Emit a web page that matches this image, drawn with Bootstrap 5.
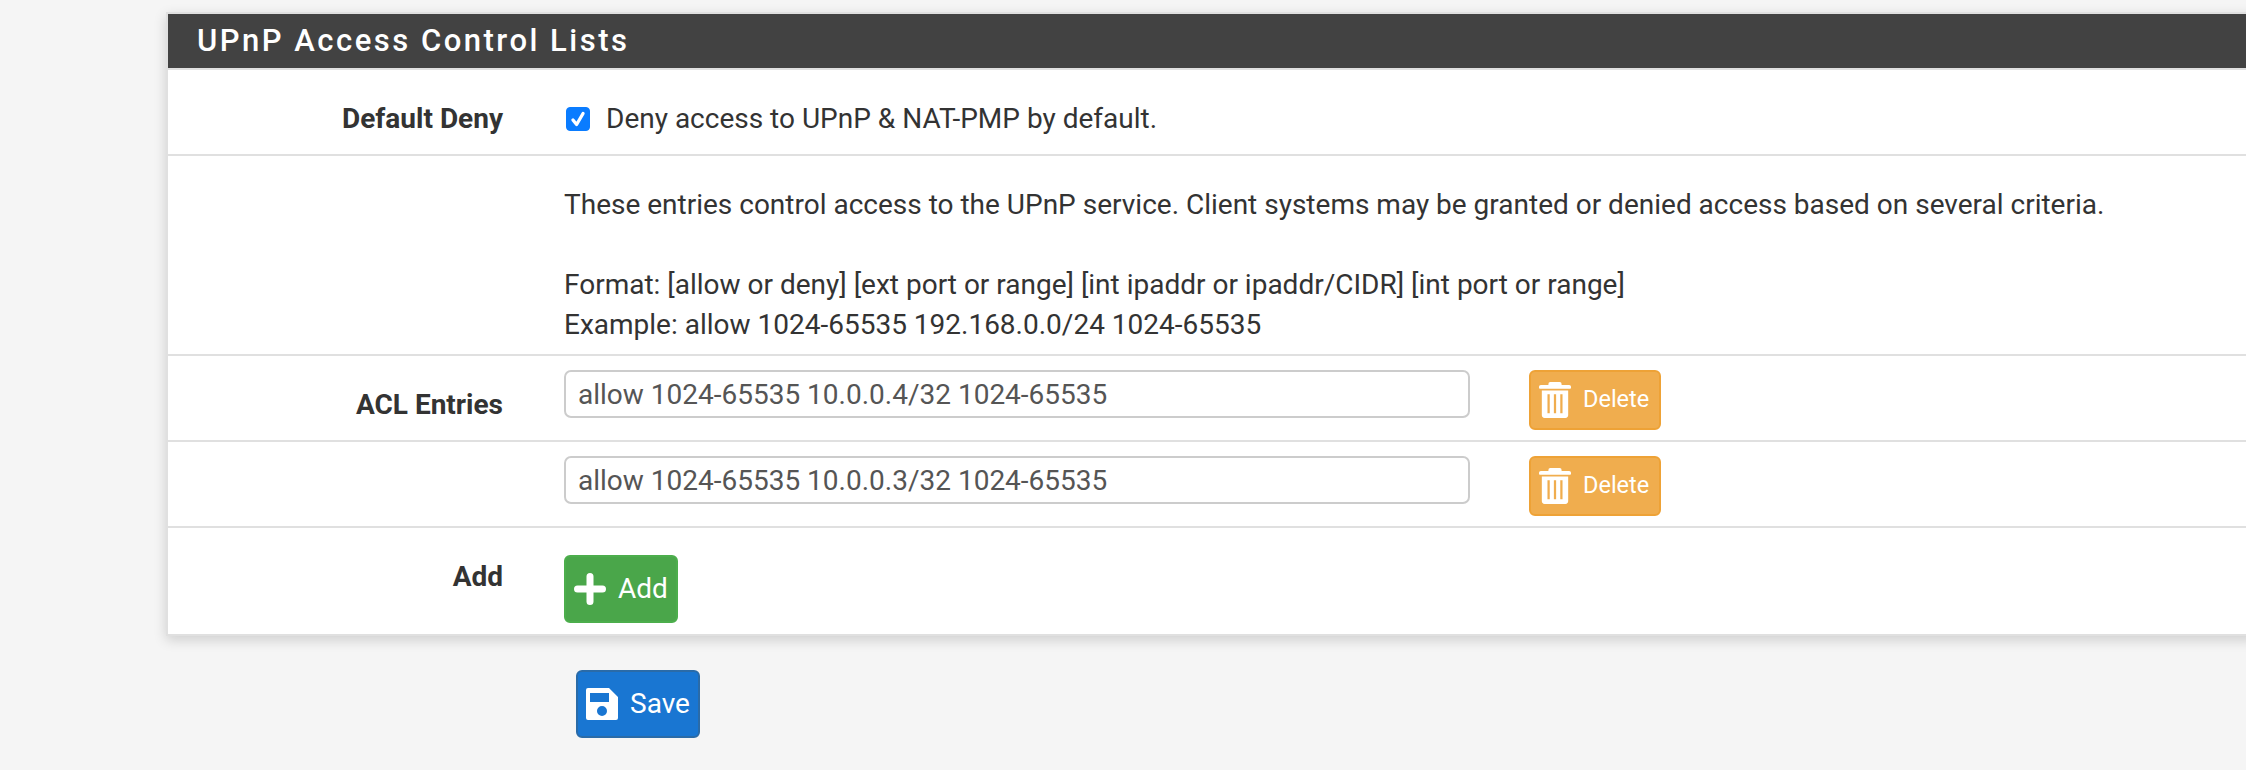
<!DOCTYPE html>
<html lang="en">

<head>
    <meta charset="UTF-8">
    <meta name="viewport" content="width=device-width, initial-scale=1.0">
    <title>UPnP</title>
    <link href="https://cdn.jsdelivr.net/npm/bootstrap@5.3.0/dist/css/bootstrap.min.css" rel="stylesheet">
    <style>
        html, body { height: 100%; overflow: hidden; }
        body { background: #f5f5f5; font-family: Roboto, "Liberation Sans", sans-serif; font-size: 28px; color: #333; line-height: 40px; }
        .acl-wrap { margin: 12px -10px 0 166px; }
        .acl-panel { background: #fff; border: 2px solid #e0e0e0; box-shadow: 0 4px 12px rgba(0,0,0,.16); }
        .acl-head { background: #424242; color: #fff; height: 54px; font-size: 31px; font-weight: 500; letter-spacing: 2.5px; line-height: 54px; padding-left: 29px; }
        .acl-row { border-top: 2px solid #e0e0e0; }
        .acl-label { width: 335px; margin-right: 61px; flex: none; text-align: right; font-weight: 700; }
        .acl-body { flex: 1; }
        .form-check-input.acl-check { width: 24px; height: 24px; margin: 0 16px 0 2px; background-color: #0a7cff; border-color: #0a7cff; border-radius: 4px; background-image: url("data:image/svg+xml,%3csvg xmlns='http://www.w3.org/2000/svg' viewBox='0 0 24 24'%3e%3cpath fill='none' stroke='%23fff' stroke-linecap='round' stroke-linejoin='round' stroke-width='3.600' d='M6.500 13l4 5 7-12'/%3e%3c/svg%3e"); background-size: 100% 100%; }
        .acl-input { width: 906px; height: 48px; border: 2px solid #ccc; border-radius: 7px; padding: 0 12px; font-size: 28px; color: #555; background: #fff; }
        .acl-btn { display: inline-flex; align-items: center; color: #fff; border-radius: 6px; padding: 0; }
        .acl-btn:hover { color: #fff; }
        .btn-del { width: 132px; height: 60px; margin-left: 59px; background: #f0ad4e; border: 2px solid #eea236; font-size: 23.5px; padding-left: 8px; gap: 12px; }
        .btn-add { width: 114px; height: 68px; background: #4aa64a; border: 2px solid #4cae4c; font-size: 28px; padding-left: 8px; gap: 12px; }
        .btn-save { width: 124px; height: 68px; margin-left: 410px; background: #1976d2; border: 2px solid #2a6ba8; font-size: 28px; padding-left: 8px; gap: 12px; }
        .r-deny { height: 86px; padding-top: 29px; }
        .r-help { height: 200px; padding-top: 29px; }
        .r-acl { height: 86px; padding-top: 14px; }
        .r-acl .acl-label { padding-top: 15px; }
        .r-add { height: 108px; padding-top: 27px; }
        .r-add .acl-label { padding-top: 2px; }
        .t-gap { margin-top: 40px; }
        .save-row { margin-top: 34px; }
    </style>
</head>

<body>
    <div class="acl-wrap">
        <div class="acl-panel">
            <div class="acl-head">UPnP Access Control Lists</div>

            <div class="acl-row r-deny d-flex">
                <div class="acl-label">Default Deny</div>
                <div class="acl-body d-flex align-items-center align-self-start">
                    <input class="form-check-input acl-check mt-0" type="checkbox" checked>
                    <span>Deny access to UPnP &amp; NAT-PMP by default.</span>
                </div>
            </div>

            <div class="acl-row r-help d-flex">
                <div class="acl-label"></div>
                <div class="acl-body">
                    <div>These entries control access to the UPnP service. Client systems may be granted or denied access based on several criteria.</div>
                    <div class="t-gap">Format: [allow or deny] [ext port or range] [int ipaddr or ipaddr/CIDR] [int port or range]</div>
                    <div>Example: allow 1024-65535 192.168.0.0/24 1024-65535</div>
                </div>
            </div>

            <div class="acl-row r-acl d-flex">
                <div class="acl-label">ACL Entries</div>
                <div class="acl-body d-flex align-items-start">
                    <input class="acl-input" type="text" value="allow 1024-65535 10.0.0.4/32 1024-65535">
                    <a class="btn acl-btn btn-del">
                        <svg width="32" height="36" viewBox="0 0 34 38" fill="#fff"><path d="M12 0h10a2 2 0 0 1 2 2v1h8a2 2 0 0 1 2 2v1a1 1 0 0 1-1 1H1a1 1 0 0 1-1-1V5a2 2 0 0 1 2-2h8V2a2 2 0 0 1 2-2z"/><path fill-rule="evenodd" d="M3 9h28v26a3 3 0 0 1-3 3H6a3 3 0 0 1-3-3zM9 13v20h2.400V13zM15.800 13v20h2.400V13zM22.600 13v20h2.400V13z"/></svg>
                        Delete
                    </a>
                </div>
            </div>

            <div class="acl-row r-acl d-flex">
                <div class="acl-label"></div>
                <div class="acl-body d-flex align-items-start">
                    <input class="acl-input" type="text" value="allow 1024-65535 10.0.0.3/32 1024-65535">
                    <a class="btn acl-btn btn-del">
                        <svg width="32" height="36" viewBox="0 0 34 38" fill="#fff"><path d="M12 0h10a2 2 0 0 1 2 2v1h8a2 2 0 0 1 2 2v1a1 1 0 0 1-1 1H1a1 1 0 0 1-1-1V5a2 2 0 0 1 2-2h8V2a2 2 0 0 1 2-2z"/><path fill-rule="evenodd" d="M3 9h28v26a3 3 0 0 1-3 3H6a3 3 0 0 1-3-3zM9 13v20h2.400V13zM15.800 13v20h2.400V13zM22.600 13v20h2.400V13z"/></svg>
                        Delete
                    </a>
                </div>
            </div>

            <div class="acl-row r-add d-flex">
                <div class="acl-label">Add</div>
                <div class="acl-body">
                    <a class="btn acl-btn btn-add">
                        <svg width="32" height="32" viewBox="0 0 32 32" fill="#fff"><path d="M12.500 3.500a3.500 3.500 0 0 1 7 0v9h9a3.500 3.500 0 0 1 0 7h-9v9a3.500 3.500 0 0 1-7 0v-9h-9a3.500 3.500 0 0 1 0-7h9z"/></svg>
                        Add
                    </a>
                </div>
            </div>
        </div>

        <div class="save-row">
            <a class="btn acl-btn btn-save">
                <svg width="32" height="32" viewBox="0 0 32 32" fill="#fff"><path fill-rule="evenodd" d="M2 0h21l9 9v21a2 2 0 0 1-2 2H2a2 2 0 0 1-2-2V2a2 2 0 0 1 2-2zM4 5v9h19V5zM16 18a5 5 0 1 0 0 10 5 5 0 0 0 0-10z"/></svg>
                Save
            </a>
        </div>
    </div>

    <script src="https://cdn.jsdelivr.net/npm/bootstrap@5.3.0/dist/js/bootstrap.bundle.min.js"></script>
</body>

</html>
